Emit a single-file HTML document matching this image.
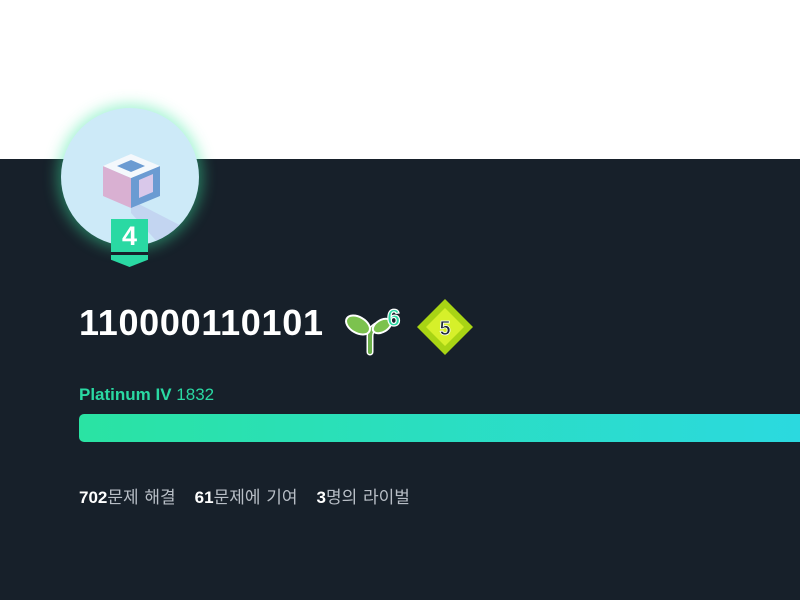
<!DOCTYPE html>
<html><head><meta charset="utf-8"><style>
*{margin:0;padding:0;box-sizing:border-box}
body{width:800px;height:600px;overflow:hidden;background:#17202a;font-family:"Liberation Sans","Noto Sans CJK KR",sans-serif;position:relative}
.top{position:absolute;left:0;top:0;width:800px;height:159px;background:#fff}
.av{position:absolute;left:61px;top:108px;width:138px;height:138px;border-radius:50%;background:#cdeaf8;box-shadow:0 0 14px 4px rgba(60,230,160,.45);overflow:hidden}
.badge{position:absolute;left:111px;top:219px;width:37px;height:48px;background:#2ad9a3;clip-path:polygon(0 0,100% 0,100% 85%,50% 100%,0 85%)}
.badge span{position:absolute;left:0;width:37px;top:2px;text-align:center;color:#fff;font-weight:bold;font-size:27px}
.badge i{position:absolute;left:0;top:33px;width:37px;height:3px;background:#17202a;}
.name{position:absolute;left:79px;top:302px;color:#fff;font-weight:bold;font-size:36px;letter-spacing:0.7px}
.tier{position:absolute;left:79px;top:385px;font-size:17px;color:#2ad9a3}
.bar{position:absolute;left:79px;top:414px;width:730px;height:28px;border-radius:5px;background:linear-gradient(90deg,#2ae3a3,#2bd9e0)}
.st{position:absolute;left:79px;top:483px;font-size:17px;color:#b8bec6;word-spacing:1px}
.st b{color:#fff}
.st .g{display:inline-block;width:19px}
</style></head><body>
<div class="top"></div>
<div class="av">
<svg width="138" height="138" viewBox="0 0 138 138" style="position:absolute;left:0;top:0">
<polygon points="70,92 140,128 140,138 100,138 70,105" fill="#b8bce8" opacity=".45"/>
<polygon points="42,58 70,70 70,100 42,88" fill="#d9b0d2"/>
<polygon points="70,70 99,58 99,88 70,100" fill="#6b9bd2"/>
<polygon points="78,72 92,66 92,84 78,90" fill="#d9c8ea"/>
<polygon points="42,58 70,46 99,58 70,70" fill="#f4f8fc"/>
<polygon points="56,58 70,52 84,58 70,64" fill="#6b9bd2"/>
</svg>
</div>
<div class="badge"><span>4</span><i></i></div>
<div class="name">110000110101</div>
<svg style="position:absolute;left:340px;top:300px" width="66" height="58" viewBox="0 0 66 58">
<path d="M30 52 L30 36 Q30 30 36 26" stroke="#fff" stroke-width="7" fill="none" stroke-linecap="round"/>
<path d="M30 52 L30 36 Q30 30 36 26" stroke="#6cb04a" stroke-width="4" fill="none" stroke-linecap="round"/>
<ellipse cx="18" cy="25" rx="13" ry="8" fill="#7cc24e" stroke="#fff" stroke-width="2" transform="rotate(30 18 25)"/>
<ellipse cx="42" cy="26" rx="10" ry="6" fill="#7cc24e" stroke="#fff" stroke-width="2" transform="rotate(-30 42 26)"/>
<text x="47" y="26" font-family="Liberation Sans" font-weight="bold" font-size="24" fill="#2ad9a3" stroke="#fff" stroke-width="1.2">6</text>
</svg>
<svg style="position:absolute;left:414px;top:296px" width="62" height="62" viewBox="0 0 62 62">
<polygon points="31,3 59,31 31,59 3,31" fill="#a8d414" />
<polygon points="31,12 50,31 31,50 12,31" fill="#d6f02a"/>
<text x="31" y="39" text-anchor="middle" font-family="Liberation Sans" font-weight="bold" font-size="20" fill="#1d2a3a" stroke="#fff" stroke-width="0.8">5</text>
</svg>
<div class="tier"><b>Platinum IV</b> 1832</div>
<div class="bar"></div>
<div class="st"><b>702</b>문제 해결<span class="g"></span><b>61</b>문제에 기여<span class="g"></span><b>3</b>명의 라이벌</div>
</body></html>
